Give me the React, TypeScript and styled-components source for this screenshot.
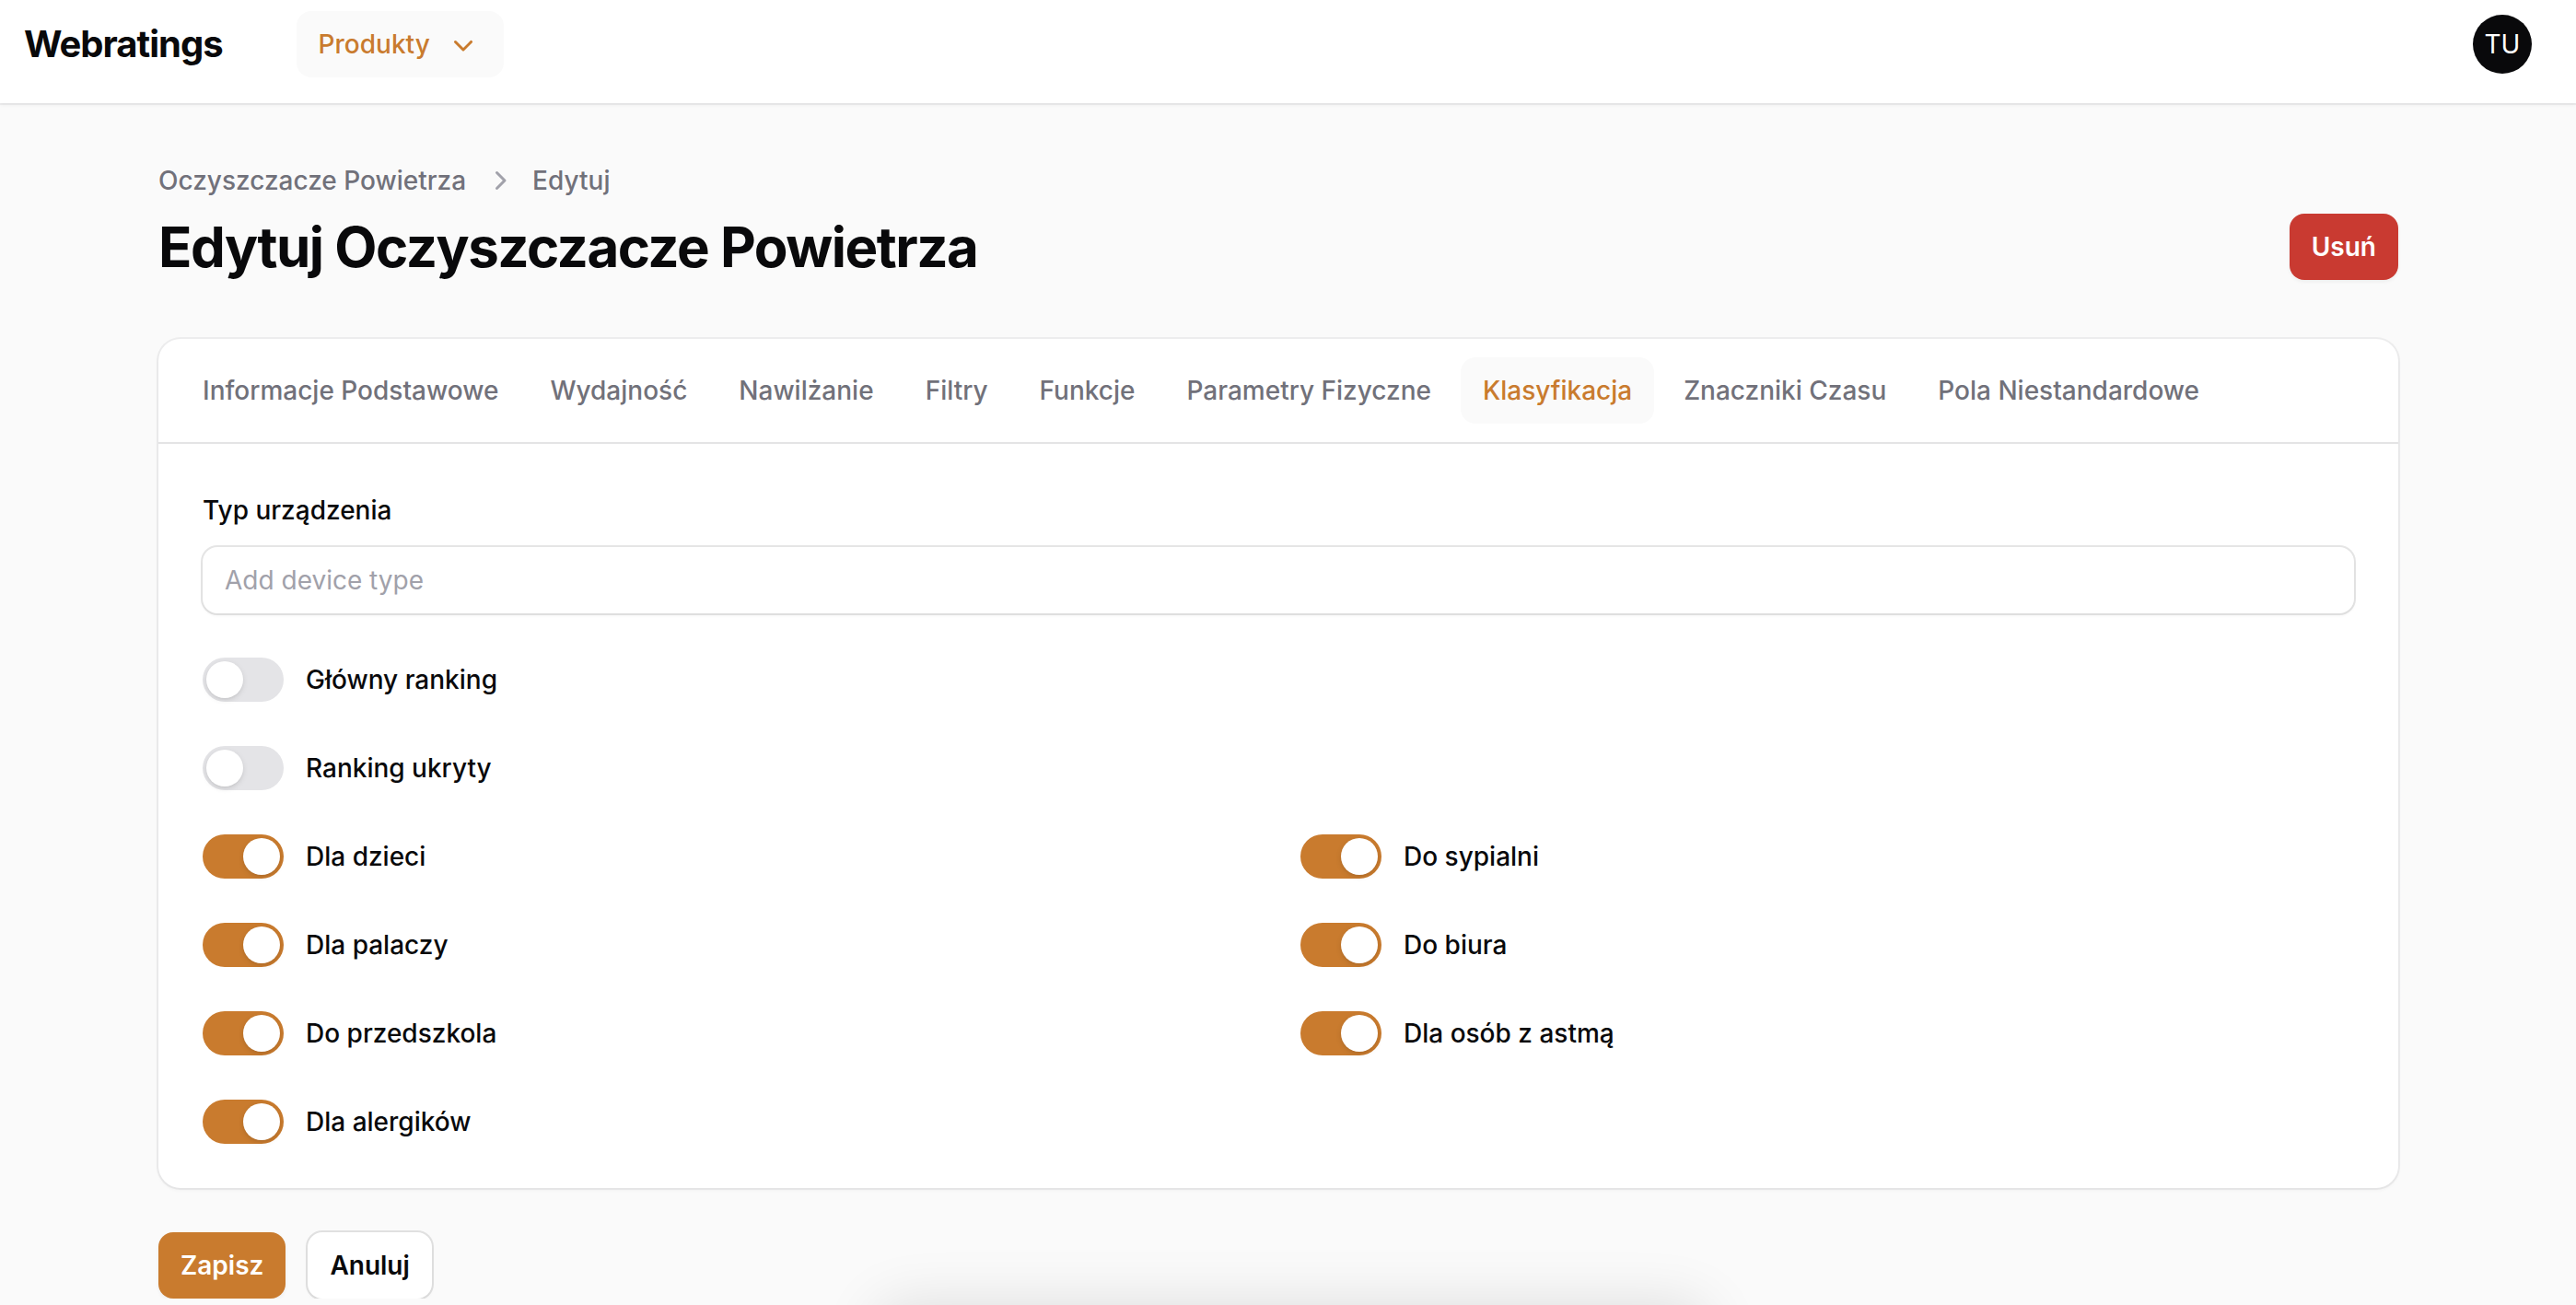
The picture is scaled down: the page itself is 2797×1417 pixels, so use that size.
import React, { useState } from "react";
import styled, { createGlobalStyle, css } from "styled-components";

const color = {
  ink: "#09090b",
  muted: "#71717a",
  faint: "#a1a1aa",
  canvas: "#fafafa",
  primary: "#c97b2e",
  danger: "#c93a31",
  line: "#e4e4e5",
  off: "#e4e4e7",
};

const shadowSmall = "0 2px 4px rgba(0, 0, 0, 0.05)";

const GlobalStyle = createGlobalStyle`
  *, *::before, *::after { box-sizing: border-box; }
  body {
    margin: 0;
    background: ${color.canvas};
    color: ${color.ink};
    font-family: Inter, "Liberation Sans", sans-serif;
    font-optical-sizing: none;
    font-size: 28px;
    line-height: 40px;
    -webkit-font-smoothing: antialiased;
  }
  button, input { font: inherit; color: inherit; }
`;

const TopBar = styled.header`
  display: flex;
  align-items: center;
  padding: 12px 48px 28px 26px;
  background: #fff;
  box-shadow: 0 0 0 2px rgba(9, 9, 11, 0.05), ${shadowSmall};
`;

const Logo = styled.a`
  color: inherit;
  text-decoration: none;
  font-size: 40px;
  font-weight: 700;
  letter-spacing: -0.025em;
`;

const MainNav = styled.nav`
  flex: 1;
  margin-left: 80px;
`;

const pill = css`
  padding: 16px 24px;
  border: 0;
  border-radius: 16px;
  font-weight: 500;
  cursor: pointer;
`;

const NavButton = styled.button`
  ${pill}
  display: flex;
  align-items: center;
  gap: 16px;
  background: ${color.canvas};
  color: ${color.primary};
`;

const Avatar = styled.button`
  width: 64px;
  height: 64px;
  padding: 0;
  border: 0;
  border-radius: 50%;
  background: ${color.ink};
  color: #fff;
  cursor: pointer;
`;

const Icon = styled.svg`
  display: block;
  width: 40px;
  height: 40px;
  fill: currentColor;
`;

const Page = styled.main`
  padding: 64px 85px 0 64px;
`;

const Container = styled.div`
  max-width: 2432px;
  margin: 0 auto;
`;

const PageHeader = styled.div`
  display: flex;
  align-items: flex-end;
  justify-content: space-between;
  margin-bottom: 64px;
`;

const Breadcrumbs = styled.ol`
  display: flex;
  align-items: center;
  gap: 16px;
  margin: 0 0 16px;
  padding: 0;
  list-style: none;
  color: ${color.faint};
`;

const Crumb = styled.a`
  color: ${color.muted};
  font-weight: 500;
  text-decoration: none;
`;

const Title = styled.h1`
  margin: 0;
  font-size: 60px;
  line-height: 72px;
  font-weight: 700;
  letter-spacing: -0.025em;
`;

const Action = styled.button<{ $tone: "primary" | "danger" | "plain" }>`
  padding: 16px 24px;
  border: 0;
  border-radius: 16px;
  font-weight: 600;
  cursor: pointer;
  color: ${(p) => (p.$tone === "plain" ? color.ink : "#fff")};
  background: ${(p) => (p.$tone === "plain" ? "#fff" : color[p.$tone])};
  box-shadow: ${(p) =>
    p.$tone === "plain" ? `0 0 0 2px rgba(9, 9, 11, 0.1), ${shadowSmall}` : shadowSmall};
`;

const Card = styled.section`
  border-radius: 24px;
  background: #fff;
  box-shadow: 0 0 0 2px rgba(9, 9, 11, 0.05), ${shadowSmall};
`;

const TabList = styled.div`
  display: flex;
  gap: 8px;
  padding: 20px 24px;
  border-bottom: 2px solid ${color.line};
`;

const Tab = styled.button<{ $active: boolean }>`
  ${pill}
  white-space: nowrap;
  background: ${(p) => (p.$active ? color.canvas : "transparent")};
  color: ${(p) => (p.$active ? color.primary : color.muted)};
`;

const FormBody = styled.div`
  display: grid;
  grid-template-columns: repeat(2, minmax(0, 1fr));
  gap: 48px;
  padding: 48px;
`;

const Field = styled.div<{ $wide?: boolean }>`
  grid-column: ${(p) => (p.$wide ? "1 / -1" : "auto")};
`;

const FieldLabel = styled.label`
  display: block;
  margin-bottom: 16px;
  line-height: 48px;
  font-weight: 500;
`;

const TextInput = styled.input`
  display: block;
  width: 100%;
  height: 72px;
  padding: 0 24px;
  border: 0;
  border-radius: 16px;
  outline: 0;
  background: #fff;
  box-shadow: 0 0 0 2px rgba(9, 9, 11, 0.1), ${shadowSmall};
  &::placeholder {
    color: ${color.faint};
    opacity: 1;
  }
`;

const ToggleLabel = styled.label`
  display: inline-flex;
  align-items: center;
  gap: 24px;
  vertical-align: top;
  line-height: 48px;
  font-weight: 500;
  cursor: pointer;
`;

const Switch = styled.input`
  appearance: none;
  display: flex;
  width: 88px;
  height: 48px;
  margin: 0;
  padding: 4px;
  border-radius: 24px;
  background: ${color.off};
  cursor: pointer;
  &::before {
    content: "";
    width: 40px;
    height: 40px;
    border-radius: 50%;
    background: #fff;
    box-shadow: 0 2px 6px rgba(0, 0, 0, 0.1), 0 2px 4px -2px rgba(0, 0, 0, 0.1);
  }
  &:checked {
    justify-content: flex-end;
    background: ${color.primary};
  }
`;

const Actions = styled.div`
  display: flex;
  gap: 24px;
  margin-top: 48px;
`;

const BottomShade = styled.div`
  position: fixed;
  bottom: -160px;
  left: 50%;
  width: 900px;
  height: 160px;
  margin-left: -446px;
  border-radius: 24px;
  box-shadow: 0 0 64px rgba(0, 0, 0, 0.12);
  pointer-events: none;
`;

const ChevronDown = () => (
  <Icon viewBox="0 0 20 20" aria-hidden="true">
    <path d="M5.22 8.22a.75.75 0 0 1 1.06 0L10 11.94l3.72-3.72a.75.75 0 1 1 1.06 1.06l-4.25 4.25a.75.75 0 0 1-1.06 0L5.22 9.28a.75.75 0 0 1 0-1.06Z" />
  </Icon>
);

const ChevronRight = () => (
  <Icon viewBox="0 0 20 20" aria-hidden="true">
    <path d="M8.22 5.22a.75.75 0 0 1 1.06 0l4.25 4.25a.75.75 0 0 1 0 1.06l-4.25 4.25a.75.75 0 0 1-1.06-1.06L11.94 10 8.22 6.28a.75.75 0 0 1 0-1.06Z" />
  </Icon>
);

const tabs = [
  "Informacje Podstawowe",
  "Wydajność",
  "Nawilżanie",
  "Filtry",
  "Funkcje",
  "Parametry Fizyczne",
  "Klasyfikacja",
  "Znaczniki Czasu",
  "Pola Niestandardowe",
];

const toggles = [
  { label: "Główny ranking", on: false, wide: true },
  { label: "Ranking ukryty", on: false, wide: true },
  { label: "Dla dzieci", on: true },
  { label: "Do sypialni", on: true },
  { label: "Dla palaczy", on: true },
  { label: "Do biura", on: true },
  { label: "Do przedszkola", on: true },
  { label: "Dla osób z astmą", on: true },
  { label: "Dla alergików", on: true },
];

export default function App() {
  const [activeTab, setActiveTab] = useState("Klasyfikacja");

  return (
    <>
      <GlobalStyle />
      <TopBar>
        <Logo href="#">Webratings</Logo>
        <MainNav>
          <NavButton type="button">
            Produkty
            <ChevronDown />
          </NavButton>
        </MainNav>
        <Avatar type="button">TU</Avatar>
      </TopBar>

      <Page>
        <Container>
          <PageHeader>
            <div>
              <Breadcrumbs>
                <li>
                  <Crumb href="#">Oczyszczacze Powietrza</Crumb>
                </li>
                <li>
                  <ChevronRight />
                </li>
                <li>
                  <Crumb href="#">Edytuj</Crumb>
                </li>
              </Breadcrumbs>
              <Title>Edytuj Oczyszczacze Powietrza</Title>
            </div>
            <Action type="button" $tone="danger">
              Usuń
            </Action>
          </PageHeader>

          <form onSubmit={(e) => e.preventDefault()}>
            <Card>
              <TabList role="tablist">
                {tabs.map((name) => (
                  <Tab
                    key={name}
                    type="button"
                    role="tab"
                    aria-selected={name === activeTab}
                    $active={name === activeTab}
                    onClick={() => setActiveTab(name)}
                  >
                    {name}
                  </Tab>
                ))}
              </TabList>
              <FormBody>
                <Field $wide>
                  <FieldLabel htmlFor="device-type">Typ urządzenia</FieldLabel>
                  <TextInput id="device-type" type="text" placeholder="Add device type" />
                </Field>
                {toggles.map(({ label, on, wide }) => (
                  <Field key={label} $wide={wide}>
                    <ToggleLabel>
                      <Switch type="checkbox" role="switch" defaultChecked={on} />
                      {label}
                    </ToggleLabel>
                  </Field>
                ))}
              </FormBody>
            </Card>
            <Actions>
              <Action type="submit" $tone="primary">
                Zapisz
              </Action>
              <Action type="button" $tone="plain">
                Anuluj
              </Action>
            </Actions>
          </form>
        </Container>
      </Page>
      <BottomShade />
    </>
  );
}
